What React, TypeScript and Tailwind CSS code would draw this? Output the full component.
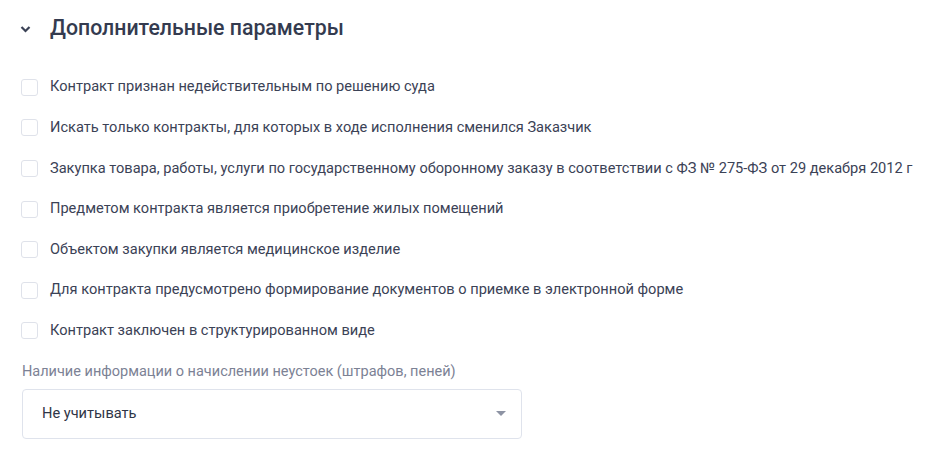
import React from 'react';

const options = [
  'Контракт признан недействительным по решению суда',
  'Искать только контракты, для которых в ходе исполнения сменился Заказчик',
  'Закупка товара, работы, услуги по государственному оборонному заказу в соответствии с ФЗ № 275-ФЗ от 29 декабря 2012 г',
  'Предметом контракта является приобретение жилых помещений',
  'Объектом закупки является медицинское изделие',
  'Для контракта предусмотрено формирование документов о приемке в электронной форме',
  'Контракт заключен в структурированном виде',
];

const App: React.FC = () => {
  return (
    <div className="w-[949px] h-[461px] bg-white font-['Roboto',sans-serif] overflow-hidden">
      <div className="flex items-center h-[56px] pl-[20px]">
        <svg width="11" height="8" viewBox="0 0 11 8" className="mt-[1px]">
          <path d="M1.5 2 L5.5 6 L9.5 2" fill="none" stroke="#3b4256" strokeWidth="2.2" />
        </svg>
        <h2 className="ml-[19px] text-[21.3px] font-medium text-[#343b4f]">
          Дополнительные параметры
        </h2>
      </div>

      <ul className="mt-[11px] pl-[21px]">
        {options.map((text) => (
          <li key={text} className="flex items-center h-[40.6px]">
            <span className="w-[17px] h-[17px] rounded-[3px] border border-[#dfe2ea] bg-white shrink-0" />
            <span className="ml-[12px] text-[14.6px] text-[#3b4256] whitespace-nowrap">{text}</span>
          </li>
        ))}
      </ul>

      <div className="pl-[22px] mt-[11px]">
        <p className="text-[14.5px] text-[#7c8295] leading-[20px]">
          Наличие информации о начислении неустоек (штрафов, пеней)
        </p>
        <button className="mt-[7px] w-[500px] h-[50px] flex items-center justify-between rounded-[4px] border border-[#dfe3ec] bg-white pl-[19px] pr-[15px]">
          <span className="text-[14.6px] text-[#2f3546]">Не учитывать</span>
          <svg width="10" height="6" viewBox="0 0 10 6">
            <path d="M0 0 L10 0 L5 5 Z" fill="#8d93a4" />
          </svg>
        </button>
      </div>
    </div>
  );
};

export default App;
